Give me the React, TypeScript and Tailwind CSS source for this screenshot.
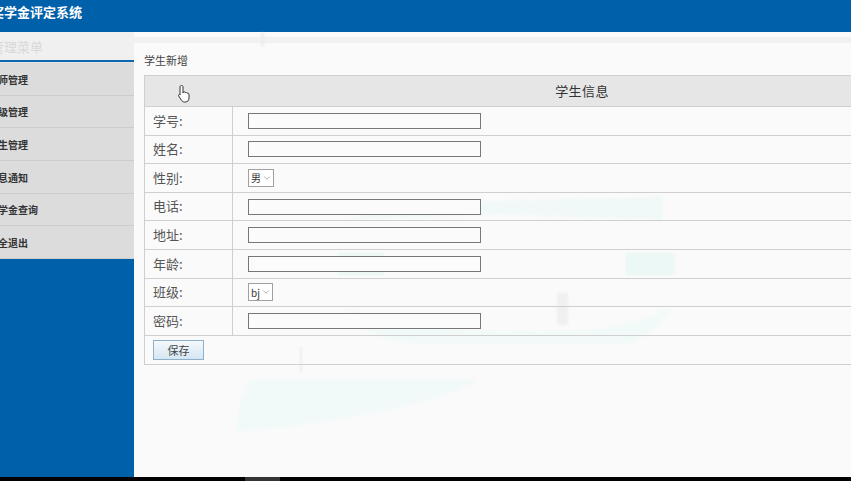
import React from 'react';
import { ChevronDown } from 'lucide-react';

const FONT = '"Noto Sans CJK SC", "Liberation Sans", sans-serif';

const MENU = ['教师管理', '班级管理', '学生管理', '信息通知', '奖学金查询', '安全退出'];

type Row = { label: string; select?: string };

const ROWS: Row[] = [
  { label: '学号:' },
  { label: '姓名:' },
  { label: '性别:', select: '男' },
  { label: '电话:' },
  { label: '地址:' },
  { label: '年龄:' },
  { label: '班级:', select: 'bj' },
  { label: '密码:' },
];

const Watermark = () => (
  <svg className="absolute left-0 top-0 pointer-events-none blur-[1px]" width="851" height="481" fill="none">
    <path d="M349 220 L400 203 L662 197 L662 220 L500 214 Z" fill="#f0f9f7" />
    <path d="M338 253 L384 253 L384 275 L338 275 Z M626 253 L675 253 L675 275 L626 275 Z" fill="#ecf8f6" />
    <path d="M344 307 C360 330 380 343 420 343 L630 343 C650 335 665 322 671 307 C640 325 600 332 520 332 C440 332 380 325 344 307 Z" fill="#f1faf8" />
    <path d="M250 380 L478 380 C440 405 320 425 236 432 L240 400 Z" fill="#f1faf9" />
    <rect x="557" y="293" width="11" height="32" fill="#f0f0f0" />
    <rect x="261" y="33" width="3" height="13" fill="#ececec" />
    <rect x="300" y="347" width="2" height="25" fill="#ececec" />
  </svg>
);

const Field = ({ row }: { row: Row }) => (
  <div className="flex h-[28.6px] border-b border-[#cfcfcf]">
    <div className="w-[88px] shrink-0 border-r border-[#cfcfcf] pl-[8px] pb-px flex items-center text-[13px] text-[#555]">
      {row.label}
    </div>
    <div className="flex items-center pl-[15px]">
      {row.select ? (
        <div className="h-[18px] flex items-center gap-px pl-[2px] pr-px border border-[#a0a0a0] bg-white text-[10px] text-[#333]">
          <span>{row.select}</span>
          <ChevronDown size={10} strokeWidth={1.5} className="text-[#777]" />
        </div>
      ) : (
        <div className="w-[233px] h-[16px] border border-[#777] bg-[#fbfbfb]" />
      )}
    </div>
  </div>
);

export default function App() {
  return (
    <div
      className="relative w-[851px] h-[481px] overflow-hidden flex flex-col bg-[#fafafa]"
      style={{ fontFamily: FONT }}
    >
      <div className="h-[32px] shrink-0 bg-[#0060aa] flex items-center pb-[9px] text-[13px] font-bold text-white whitespace-nowrap">
        <span className="-ml-[9px]">奖学金评定系统</span>
      </div>

      <div className="flex-1 min-h-0 flex">
        <aside className="w-[134px] shrink-0 flex flex-col bg-[#0060aa] overflow-hidden">
          <div className="h-[28px] bg-[#f0f0f0] flex items-center pt-[2px] text-[13px] text-[#d8d8d8] whitespace-nowrap">
            <span className="-ml-[9px]">管理菜单</span>
          </div>
          <div className="h-[2px] bg-[#0f68ad]" />
          <div className="h-[1px] bg-[#e4e4e4]" />
          {MENU.map((item) => (
            <div
              key={item}
              className="h-[32.67px] bg-[#dcdcdc] border-b border-[#cdcdcd] pt-px flex items-center text-[10px] font-bold text-[#333] whitespace-nowrap"
            >
              <span className="-ml-[12px]">{item}</span>
            </div>
          ))}
        </aside>

        <main className="flex-1 min-w-0 relative">
          <div className="h-[6px] mt-[5px] bg-[#f1f1f0]" />
          <div className="pl-[10px] pt-[9px]">
            <div className="text-[11px] leading-[16px] text-[#444]">学生新增</div>
            <div className="relative z-10 mt-[7px] w-[876px] border border-[#cfcfcf]">
              <div className="h-[31px] bg-[#e6e6e6] border-b border-[#cfcfcf] flex items-center justify-center text-[13px] tracking-[0.4px] text-[#333]">
                学生信息
              </div>
              {ROWS.map((row) => (
                <Field key={row.label} row={row} />
              ))}
              <div className="h-[28px] pl-[8px]">
                <button className="w-[51px] h-[20px] mt-px border border-[#8fb0c8] bg-gradient-to-b from-[#f4f9fd] to-[#d5e6f3] text-[11px] text-[#444]">
                  保存
                </button>
              </div>
            </div>
          </div>
        </main>
      </div>

      <div className="h-[4px] shrink-0 bg-black flex">
        <div className="ml-[245px] w-[35px] bg-[#333]" />
      </div>

      <Watermark />

      <svg className="absolute z-20 left-[177px] top-[84px]" width="16" height="20" viewBox="0 0 16 20" fill="#fff" stroke="#333" strokeWidth="1">
        <path d="M4.5 1.5c1 0 1.5.6 1.5 1.5v6l.5-.8c.8-.6 1.6-.3 1.8.5.8-.5 1.6-.2 1.8.6.8-.4 1.9 0 1.9 1V14c0 2.4-1.4 4-3.7 4H7.5c-1.5 0-2.4-.8-3.2-2L1.7 12c-.6-1 .5-2 1.4-1.2L3 11V3c0-.9.5-1.5 1.5-1.5z" />
      </svg>
    </div>
  );
}
